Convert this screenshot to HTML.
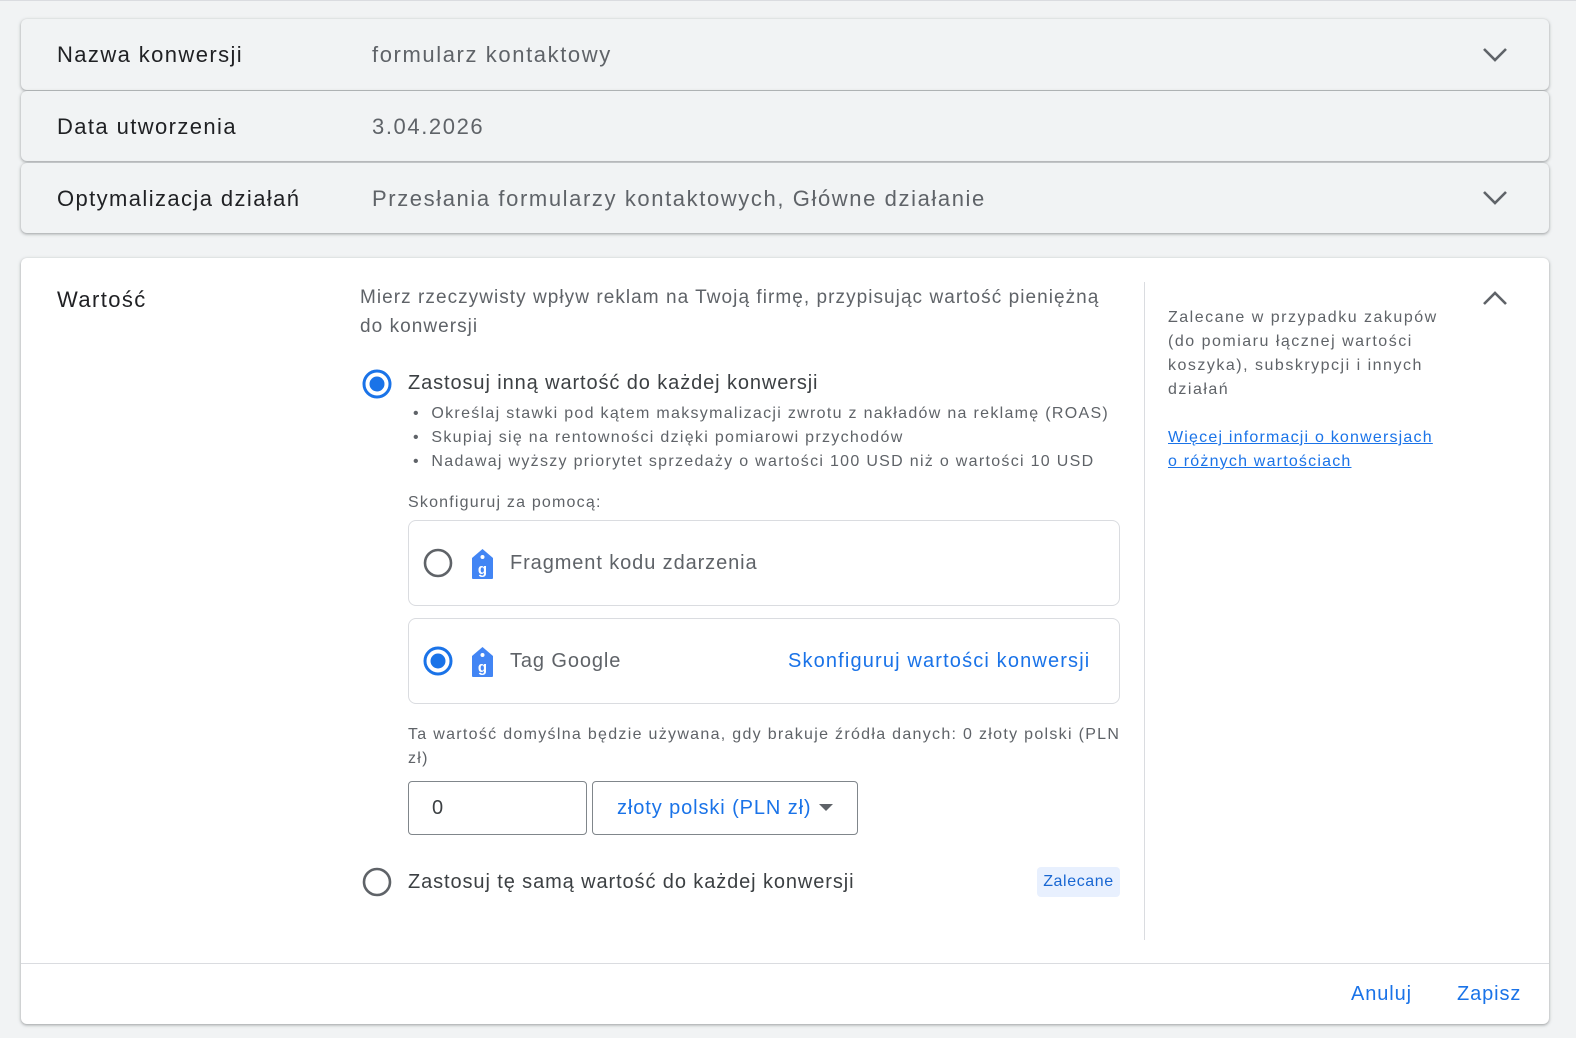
<!DOCTYPE html>
<html><head><meta charset="utf-8"><style>
*{box-sizing:border-box;margin:0;padding:0}
body{width:1576px;height:1038px;background:#f1f3f4;font-family:"Liberation Sans",Roboto,sans-serif;position:relative;overflow:hidden;color:#3c4043}
.a{position:absolute;white-space:nowrap}
.row{position:absolute;left:21px;width:1528px;background:#f1f3f4;border-radius:6px;box-shadow:0 1px 2px rgba(60,64,67,.3),0 1px 3px 1px rgba(60,64,67,.15)}
.lbl{font-size:22px;color:#202124;letter-spacing:1.4px}
.val{font-size:22px;color:#5f6368;letter-spacing:1.6px}
.card{position:absolute;left:21px;top:258px;width:1528px;height:766px;background:#fff;border-radius:6px;box-shadow:0 1px 2px rgba(60,64,67,.3),0 1px 3px 1px rgba(60,64,67,.15)}
.box{position:absolute;border:1px solid #dadce0;border-radius:8px;background:#fff}
.blue{color:#1a73e8}
.sm{font-size:16px;color:#5f6368;letter-spacing:1.3px}
.r20{font-size:20px;letter-spacing:.9px}
</style></head><body>
<div class="a" style="left:0;top:0;width:1576px;height:1px;background:#dadce0"></div>
<div class="row" style="top:19px;height:71px"></div>
<div class="row" style="top:91px;height:70px"></div>
<div class="row" style="top:163px;height:70px"></div>
<div class="a lbl" style="left:57px;top:42px">Nazwa konwersji</div>
<div class="a val" style="left:372px;top:42px">formularz kontaktowy</div>
<div class="a lbl" style="left:57px;top:114px">Data utworzenia</div>
<div class="a val" style="left:372px;top:114px">3.04.2026</div>
<div class="a lbl" style="left:57px;top:186px">Optymalizacja działań</div>
<div class="a val" style="left:372px;top:186px">Przesłania formularzy kontaktowych, Główne działanie</div>
<svg class="a" style="left:1480px;top:42px" width="32" height="24"><path d="M4 7 L15 18 L26 7" fill="none" stroke="#5f6368" stroke-width="2.6"/></svg>
<svg class="a" style="left:1480px;top:185px" width="32" height="24"><path d="M4 7 L15 18 L26 7" fill="none" stroke="#5f6368" stroke-width="2.6"/></svg>

<div class="card"></div>
<div class="a lbl" style="left:57px;top:287px">Wartość</div>
<div class="a" style="left:360px;top:283px;font-size:19px;color:#5f6368;line-height:29px;letter-spacing:1.05px">Mierz rzeczywisty wpływ reklam na Twoją firmę, przypisując wartość pieniężną<br>do konwersji</div>
<svg class="a" style="left:1480px;top:287px" width="32" height="24"><path d="M4 17 L15 6 L26 17" fill="none" stroke="#5f6368" stroke-width="2.6"/></svg>
<div class="a" style="left:1144px;top:282px;width:1px;height:658px;background:#dadce0"></div>
<div class="a sm" style="left:1168px;top:306px;line-height:24px;letter-spacing:1.5px">Zalecane w przypadku zakupów<br>(do pomiaru łącznej wartości<br>koszyka), subskrypcji i innych<br>działań</div>
<div class="a sm" style="left:1168px;top:426px;line-height:24px;color:#1a73e8;text-decoration:underline;letter-spacing:1.2px">Więcej informacji o konwersjach<br>o różnych wartościach</div>

<svg class="a" style="left:361px;top:368px" width="32" height="32"><circle cx="16" cy="16" r="13" fill="none" stroke="#1a73e8" stroke-width="3"/><circle cx="16" cy="16" r="7.5" fill="#1a73e8"/></svg>
<div class="a r20" style="left:408px;top:372px;color:#3c4043">Zastosuj inną wartość do każdej konwersji</div>
<div class="a sm" style="left:413px;top:402px;line-height:24px">•&nbsp; Określaj stawki pod kątem maksymalizacji zwrotu z nakładów na reklamę (ROAS)<br>•&nbsp; Skupiaj się na rentowności dzięki pomiarowi przychodów<br>•&nbsp; Nadawaj wyższy priorytet sprzedaży o wartości 100 USD niż o wartości 10 USD</div>
<div class="a sm" style="left:408px;top:494px;letter-spacing:1.2px">Skonfiguruj za pomocą:</div>

<div class="box" style="left:408px;top:520px;width:712px;height:86px"></div>
<svg class="a" style="left:422px;top:547px" width="32" height="32"><circle cx="16" cy="16" r="13" fill="none" stroke="#5f6368" stroke-width="2.6"/></svg>
<svg class="a" style="left:471px;top:548px" width="24" height="32"><path d="M11.5 1 L22 10 V30 Q22 31 21 31 H2 Q1 31 1 30 V10 Z" fill="#4285f4"/><circle cx="11.5" cy="9" r="2" fill="#fff"/><text x="11.5" y="26" font-size="15" font-weight="bold" fill="#fff" text-anchor="middle" font-family="Liberation Sans">g</text></svg>
<div class="a r20" style="left:510px;top:552px;color:#5f6368">Fragment kodu zdarzenia</div>

<div class="box" style="left:408px;top:618px;width:712px;height:86px"></div>
<svg class="a" style="left:422px;top:645px" width="32" height="32"><circle cx="16" cy="16" r="13" fill="none" stroke="#1a73e8" stroke-width="3"/><circle cx="16" cy="16" r="7.5" fill="#1a73e8"/></svg>
<svg class="a" style="left:471px;top:646px" width="24" height="32"><path d="M11.5 1 L22 10 V30 Q22 31 21 31 H2 Q1 31 1 30 V10 Z" fill="#4285f4"/><circle cx="11.5" cy="9" r="2" fill="#fff"/><text x="11.5" y="26" font-size="15" font-weight="bold" fill="#fff" text-anchor="middle" font-family="Liberation Sans">g</text></svg>
<div class="a r20" style="left:510px;top:650px;color:#5f6368">Tag Google</div>
<div class="a blue r20" style="left:788px;top:650px;letter-spacing:1.15px">Skonfiguruj wartości konwersji</div>

<div class="a sm" style="left:408px;top:723px;line-height:24px">Ta wartość domyślna będzie używana, gdy brakuje źródła danych: 0 złoty polski (PLN<br>zł)</div>
<div class="a" style="left:408px;top:781px;width:179px;height:54px;border:1px solid #80868b;border-radius:4px"></div>
<div class="a" style="left:432px;top:797px;font-size:20px;color:#3c4043">0</div>
<div class="a" style="left:592px;top:781px;width:266px;height:54px;border:1px solid #80868b;border-radius:4px"></div>
<div class="a blue r20" style="left:617px;top:797px">złoty polski (PLN zł)</div>
<svg class="a" style="left:818px;top:803px" width="16" height="10"><path d="M1 1 L15 1 L8 8 Z" fill="#5f6368"/></svg>

<svg class="a" style="left:361px;top:866px" width="32" height="32"><circle cx="16" cy="16" r="13" fill="none" stroke="#5f6368" stroke-width="2.6"/></svg>
<div class="a r20" style="left:408px;top:871px;color:#3c4043">Zastosuj tę samą wartość do każdej konwersji</div>
<div class="a" style="left:1037px;top:867px;width:83px;height:30px;background:#e8f0fe;border-radius:4px;color:#1967d2;font-size:16px;line-height:30px;text-align:center;letter-spacing:.6px">Zalecane</div>

<div class="a" style="left:21px;top:963px;width:1528px;height:1px;background:#dadce0"></div>
<div class="a blue r20" style="left:1351px;top:983px">Anuluj</div>
<div class="a blue r20" style="left:1457px;top:983px">Zapisz</div>
</body></html>
